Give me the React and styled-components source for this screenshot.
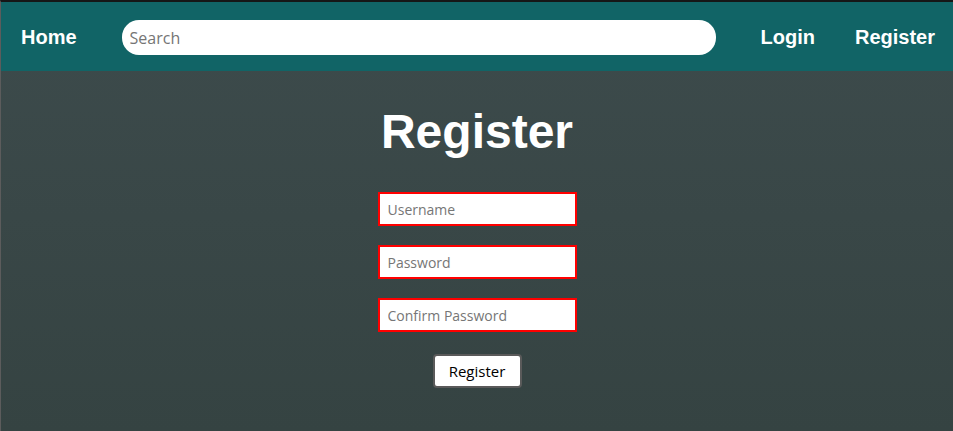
import React from "react";
import styled, { createGlobalStyle } from "styled-components";

const Global = createGlobalStyle`
  html, body { margin: 0; padding: 0; height: 100%; }
  body { font-family: "Liberation Sans", Arial, sans-serif; background: #364443; }
  #root { height: 100%; }
  * { box-sizing: border-box; }
`;

const Page = styled.div`
  min-height: 431px;
  border-top: 2px solid #161616;
  border-left: 1px solid #5c5c5c;
  background: linear-gradient(#3d4b4c, #354342);
  display: flex;
  flex-direction: column;
`;

const Nav = styled.nav`
  height: 69px;
  background: #116466;
  display: flex;
  align-items: center;
  padding: 2px 18px 0 20px;
`;

const NavLink = styled.a`
  color: #fff;
  font-family: "Liberation Sans", Arial, sans-serif;
  font-weight: bold;
  font-size: 20px;
  text-decoration: none;
  margin-left: ${(p) => p.$gap || 0}px;
`;

const Search = styled.input`
  width: 595px;
  height: 35px;
  margin: 0 45px;
  border: none;
  border-radius: 17px;
  padding: 0 8px;
  font-family: "Open Sans", "Noto Sans", sans-serif;
  font-size: 16px;
  outline: none;
  &::placeholder { color: #757575; }
`;

const Main = styled.main`
  display: flex;
  flex-direction: column;
  align-items: center;
  padding-top: 33px;
`;

const Title = styled.h1`
  margin: 0 0 33px;
  color: #fff;
  font-family: "Liberation Sans", Arial, sans-serif;
  font-weight: bold;
  font-size: 48px;
`;

const Form = styled.form`
  display: flex;
  flex-direction: column;
  align-items: center;
  gap: 19px;
`;

const Field = styled.input`
  width: 199px;
  height: 34px;
  border: 2px solid #ff0000;
  padding: 0 8px;
  font-family: "Open Sans", "Noto Sans", sans-serif;
  font-size: 14px;
  outline: none;
  background: #fff;
  &::placeholder { color: #767676; }
`;

const Button = styled.button`
  margin-top: 3px;
  width: 89px;
  height: 34px;
  background: #fff;
  border: 2px solid #5a5a5a;
  border-radius: 4px;
  color: #000;
  font-family: "Open Sans", "Noto Sans", sans-serif;
  font-size: 15px;
  cursor: pointer;
`;

export default function App() {
  return (
    <>
      <Global />
      <Page>
        <Nav>
          <NavLink href="#">Home</NavLink>
          <Search placeholder="Search" />
          <NavLink href="#">Login</NavLink>
          <NavLink href="#" $gap={40}>Register</NavLink>
        </Nav>
        <Main>
          <Title>Register</Title>
          <Form onSubmit={(e) => e.preventDefault()}>
            <Field placeholder="Username" />
            <Field type="password" placeholder="Password" />
            <Field type="password" placeholder="Confirm Password" />
            <Button type="submit">Register</Button>
          </Form>
        </Main>
      </Page>
    </>
  );
}
